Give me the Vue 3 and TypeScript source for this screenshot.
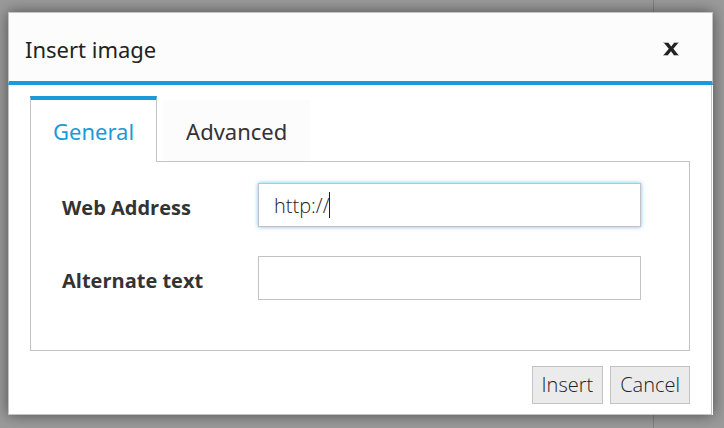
<script setup lang="ts">
import { ref } from 'vue'

type Tab = 'General' | 'Advanced'

const tabs: Tab[] = ['General', 'Advanced']
const active = ref<Tab>('General')
const address = ref('http://')
const alternate = ref('')
</script>

<template>
  <div class="page">
    <section class="dialog" role="dialog" aria-labelledby="dialog-title">
      <header class="header">
        <h1 id="dialog-title" class="title">Insert image</h1>
        <button class="close" type="button" aria-label="Close">
          <svg width="16" height="14" viewBox="0 0 16 14" fill="#222">
            <path d="M1 1H5.6L8.2 4.4L11 1H15.2L10.4 6.8L15.4 13H10.8L8 9.2L5 13H.6L5.8 6.8Z" />
            <path d="M0 0H5.5V1H0ZM10.8 0H16V1H10.8ZM0 13H5.2V14H0ZM10.6 13H16V14H10.6Z" fill-opacity=".3" />
          </svg>
        </button>
      </header>
      <form class="body" @submit.prevent>
        <div class="tabs" role="tablist">
          <button
            v-for="tab in tabs"
            :key="tab"
            class="tab"
            :class="{ active: tab === active }"
            type="button"
            role="tab"
            :aria-selected="tab === active"
            @click="active = tab"
          >{{ tab }}</button>
        </div>
        <div class="panel" role="tabpanel">
          <label class="label" for="address">Web Address</label>
          <div class="field focused">
            <input id="address" v-model="address" class="input" type="text" />
            <span class="caret"></span>
          </div>
          <label class="label" for="alternate">Alternate text</label>
          <div class="field">
            <input id="alternate" v-model="alternate" class="input" type="text" />
          </div>
        </div>
        <footer class="actions">
          <button class="action" type="submit">Insert</button>
          <button class="action" type="button">Cancel</button>
        </footer>
      </form>
    </section>
  </div>
</template>

<style>
body {
  margin: 0;
  background: #9b9b9b;
}
</style>

<style scoped>
.page,
.page * {
  box-sizing: border-box;
}
.page {
  min-height: 100vh;
  padding: 12px 11px 13px 8px;
  background: linear-gradient(#828282, #828282) right 70px top / 1px 100% no-repeat #9b9b9b;
  font-family: "Open Sans", "Noto Sans", sans-serif;
  color: #333;
}
button,
input {
  margin: 0;
  font-family: inherit;
  color: inherit;
  border-radius: 0;
}
.dialog {
  background: #fff;
  box-shadow: 0 0 14px rgba(0, 0, 0, 0.5);
}
.header {
  display: flex;
  align-items: center;
  justify-content: space-between;
  height: 73px;
  padding: 4px 33px 0 16px;
  background: #fcfcfc;
  border: 1px solid #c3c3c3;
  border-bottom: 4px solid #1a9ad7;
}
.title,
.tab {
  font-family: "Noto Sans", "Open Sans", sans-serif;
  font-size: 22px;
  line-height: 32px;
  font-weight: 400;
}
.title {
  margin: 0;
  color: #222;
}
.close {
  display: flex;
  padding: 0;
  border: 0;
  background: none;
}
.body {
  margin-right: 1px;
  padding: 11px 21px 10px;
  border: 1px solid #c3c3c3;
  border-top: 0;
}
.tabs {
  display: flex;
  align-items: flex-end;
  gap: 6px;
}
.tab {
  height: 61px;
  padding: 0 23px;
  border: 0;
  background: #fcfcfc;
}
.tab.active {
  position: relative;
  height: 66px;
  margin-bottom: -1px;
  padding: 0 22px;
  border: 1px solid #c3c3c3;
  border-top: 4px solid #1a9ad7;
  border-bottom: 0;
  background: #fff;
  color: #1a9ad7;
}
.panel {
  display: grid;
  grid-template-columns: 196px 1fr;
  align-items: center;
  row-gap: 29px;
  padding: 21px 48px 50px 31px;
  border: 1px solid #c3c3c3;
}
.label {
  padding-top: 6px;
  font-size: 20px;
  line-height: 28px;
  font-weight: 700;
}
.field {
  position: relative;
  display: flex;
}
.input {
  width: 100%;
  height: 44px;
  padding: 0 15px;
  border: 1px solid #c3c3c3;
  outline: 0;
  background: #fff;
  color: #222;
  font-size: 20px;
  font-weight: 300;
}
.focused .input {
  box-shadow: 0 0 4px #66c4ec;
}
.caret {
  position: absolute;
  top: 9px;
  left: 71px;
  width: 1px;
  height: 26px;
  background: #222;
}
.actions {
  display: flex;
  justify-content: flex-end;
  gap: 7px;
  margin-top: 15px;
}
.action {
  height: 38px;
  padding: 0 9px;
  border: 1px solid #c3c3c3;
  background: #ebebeb;
  color: #222;
  font-size: 20px;
  font-weight: 300;
  line-height: 28px;
}
</style>
